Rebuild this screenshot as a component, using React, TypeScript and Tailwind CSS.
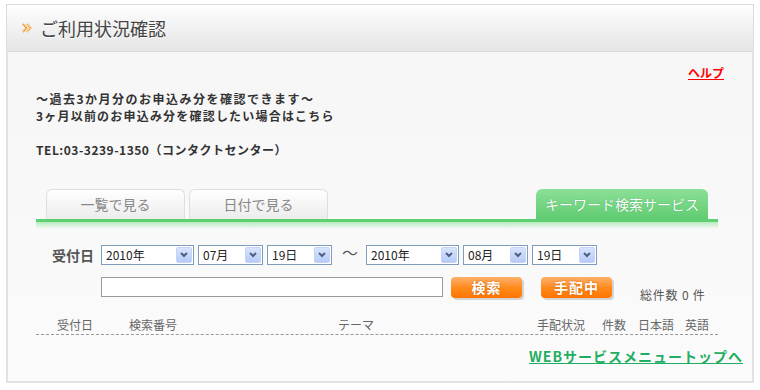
import React from "react";

const jp = { fontFamily: '"Noto Sans CJK JP", "Noto Sans", sans-serif' };

function Select({ value, width }: { value: string; width: string }) {
  return (
    <div className={`${width} h-[20px] border border-[#7f9db9] bg-white flex items-center justify-between pl-[4px] pr-[1px]`}>
      <span className="text-[12px] text-[#222] leading-none">{value}</span>
      <span className="w-[16px] h-[16px] rounded-[2px] bg-gradient-to-b from-[#d8e4fd] to-[#b7cbf7] border border-[#c3d3f8] flex items-center justify-center">
        <svg width="8" height="6" viewBox="0 0 8 6">
          <path d="M1 1 L4 4 L7 1" fill="none" stroke="#4d6185" strokeWidth="2" />
        </svg>
      </span>
    </div>
  );
}

function OrangeButton({ label }: { label: string }) {
  return (
    <div className="w-[71px] h-[21px] rounded-[4px] shadow-[2px_2px_0_#d4d4d4] overflow-hidden relative flex items-center justify-center bg-gradient-to-b from-[#ffb066] via-[#ff8c1a] to-[#ff7400]">
      <span className="text-[14px] font-bold text-white leading-none tracking-[1px] [text-shadow:0_0_2px_#c85a00]">{label}</span>
    </div>
  );
}

export default function App() {
  return (
    <div className="w-[760px] h-[390px] bg-white overflow-hidden" style={jp}>
      <div className="ml-[6px] mt-[4px] w-[748px]">
        <div className="h-[48px] border border-[#dcdcdc] bg-gradient-to-b from-[#fefefe] to-[#e5e5e5] flex items-center pl-[15px] gap-[8px]">
          <svg width="10" height="10" viewBox="0 0 10 10">
            <path d="M1 1 L4.5 5 L1 9" fill="none" stroke="#f7941d" strokeWidth="2" strokeDasharray="1.4 0.6" />
            <path d="M5 1 L8.5 5 L5 9" fill="none" stroke="#f7a84a" strokeWidth="2" strokeDasharray="1.4 0.6" />
          </svg>
          <span className="text-[18px] text-[#444] leading-none [text-shadow:0_1px_0_#fff]">ご利用状況確認</span>
        </div>

        <div className="h-[331px] border-l-2 border-r-2 border-b-2 border-[#e2e2e2] bg-gradient-to-b from-[#f6f6f6] to-[#fbfbfb] pl-[28px] pr-[32px] flex flex-col">
          <div className="mt-[14px] flex justify-end">
            <a className="text-[12px] leading-[14px] font-bold text-[#ff0000] underline mr-[-4px]">ヘルプ</a>
          </div>

          <div className="mt-[10px] text-[12px] leading-[17px] font-bold text-[#333]">
            <p className="tracking-[1.5px]">～過去3か月分のお申込み分を確認できます～</p>
            <p className="tracking-[1.2px]">3ヶ月以前のお申込み分を確認したい場合はこちら</p>
            <p>&nbsp;</p>
            <p className="tracking-[0.5px]">TEL:03-3239-1350（コンタクトセンター）</p>
          </div>

          <div className="mt-[31px] w-[682px]">
            <div className="flex items-end h-[30px] pl-[10px] pr-[10px]">
              <div className="w-[139px] h-[30px] rounded-t-[6px] border border-b-0 border-[#dedede] bg-gradient-to-b from-white to-[#ececec] flex items-center justify-center text-[14px] text-[#888]">一覧で見る</div>
              <div className="ml-[4px] w-[139px] h-[30px] rounded-t-[6px] border border-b-0 border-[#dedede] bg-gradient-to-b from-white to-[#ececec] flex items-center justify-center text-[14px] text-[#888]">日付で見る</div>
              <div className="ml-auto w-[172px] h-[30px] rounded-t-[6px] bg-gradient-to-b from-[#8be096] to-[#5fcc72] flex items-center justify-center text-[14px] text-white [text-shadow:0_0_1px_#3a9a4a]">キーワード検索サービス</div>
            </div>
            <div className="h-[3px] bg-[#5fcf72]" />
            <div className="h-[7px] bg-gradient-to-b from-[#b6ecbf] to-transparent" />
          </div>

          <div className="mt-[16px] flex items-center">
            <span className="ml-[16px] w-[49px] text-[14px] font-bold text-[#555] leading-none">受付日</span>
            <Select value="2010年" width="w-[93px]" />
            <div className="ml-[4px]"><Select value="07月" width="w-[65px]" /></div>
            <div className="ml-[4px]"><Select value="19日" width="w-[65px]" /></div>
            <span className="ml-[10px] w-[24px] text-[16px] text-[#555] leading-none -mt-[6px]">～</span>
            <Select value="2010年" width="w-[93px]" />
            <div className="ml-[4px]"><Select value="08月" width="w-[65px]" /></div>
            <div className="ml-[4px]"><Select value="19日" width="w-[65px]" /></div>
          </div>

          <div className="mt-[8px] flex items-center">
            <div className="ml-[65px] w-[342px] h-[20px] border border-[#999] bg-white" />
            <div className="ml-[8px]"><OrangeButton label="検索" /></div>
            <div className="ml-[19px]"><OrangeButton label="手配中" /></div>
            <span className="ml-[28px] mt-[16px] text-[12px] text-[#555] leading-none tracking-[0.8px]">総件数 0 件</span>
          </div>

          <div className="mt-[14px] w-[682px] h-[20px] border-b border-dashed border-[#999] flex items-center text-[12px] text-[#666] leading-none">
            <span className="ml-[21px]">受付日</span>
            <span className="ml-[36px]">検索番号</span>
            <span className="ml-[161px]">テーマ</span>
            <span className="ml-[163px]">手配状況</span>
            <span className="ml-[17px]">件数</span>
            <span className="ml-[12px]">日本語</span>
            <span className="ml-[11px]">英語</span>
          </div>

          <div className="mt-[14px] flex justify-end mr-[-23px]">
            <a className="text-[14px] font-bold text-[#1fae62] underline leading-none tracking-[1px]">WEBサービスメニュートップへ</a>
          </div>
        </div>
      </div>
    </div>
  );
}
